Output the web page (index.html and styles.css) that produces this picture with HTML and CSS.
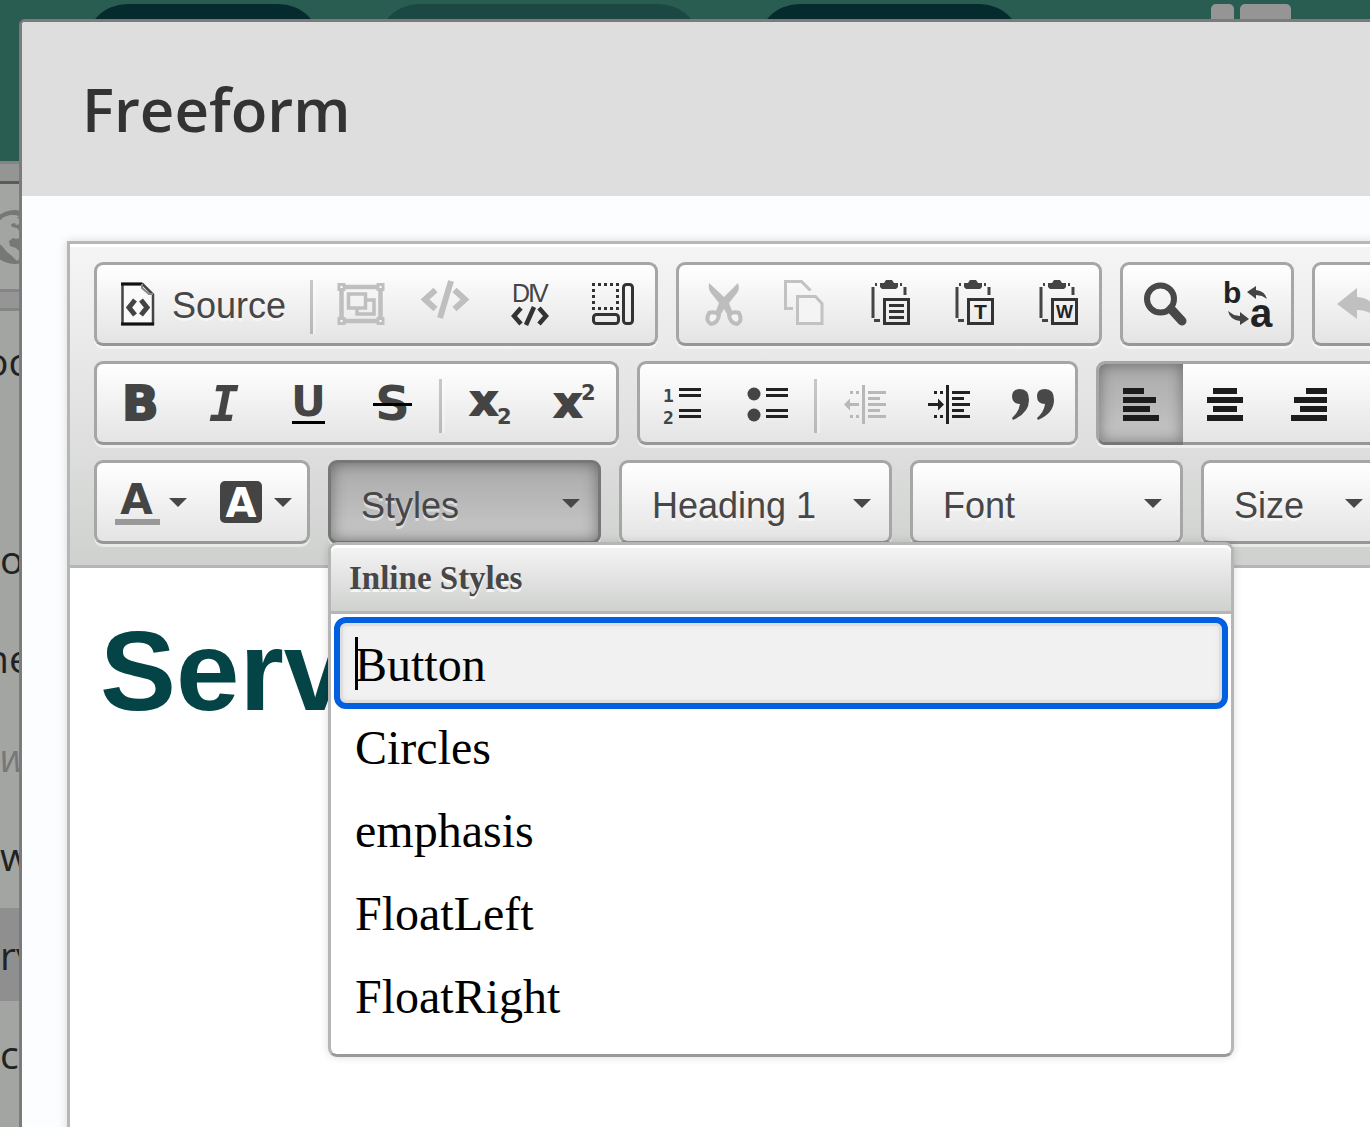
FILE: index.html
```html
<!DOCTYPE html>
<html lang="en">
<head>
  <meta charset="utf-8">
  <title>Freeform</title>
  <link rel="stylesheet" href="styles.css">
</head>
<body>
  <div class="page">
    <div class="site-header">
      <span class="pill pill-small"></span>
      <span class="pill pill-large"></span>
      <span class="pill pill-medium"></span>
      <div class="header-tabs">
        <span class="header-tab"></span>
        <span class="header-tab header-tab-wide"></span>
      </div>
    </div>
    <div class="sidebar">
      <div class="sidebar-bar sidebar-bar-top"></div>
      <div class="sidebar-globe">
        <svg class="globe" viewBox="0 0 54 54">
          <circle cx="27" cy="27" r="27" fill="#767876"/>
          <path d="M10 12l6-5 6-2 5 0 4 1-2 2 3 1v5l-4 1-1-2-4 1 1 3 5 1 3 4v6l-4 1-3-1-4 3 1 5 6 2 4 4v6l-3 3-5-5-5-4-5-6-4-3-3-7-2-6 2-5z" fill="#a3a5a3"/>
        </svg>
      </div>
      <div class="sidebar-bar sidebar-bar-mid"></div>
      <ul class="tree">
        <li class="tree-shifted">oc</li>
        <li></li>
        <li>o</li>
        <li class="tree-shifted">ne</li>
        <li class="tree-muted">w</li>
        <li>w</li>
        <li class="tree-selected">rv</li>
        <li>c</li>
      </ul>
    </div>
  </div>

  <div class="dialog" role="dialog" aria-labelledby="dialogTitle">
    <div class="dialog-header">
      <h1 id="dialogTitle">Freeform</h1>
    </div>
    <div class="dialog-body">
      <div class="editor">
        <div class="toolbar">
          <div class="toolbar-row">
            <div class="group">
              <button class="btn" type="button">
                <svg class="icon" viewBox="0 0 48 48"><path d="M7.500 4h20l10.500 10.500v29.500h-30.500z" fill="#fafafa" stroke="#444" stroke-width="2.500"/><path d="M6 4h21M6 44h33" stroke="#111" stroke-width="3"/><path d="M27 4v4l7 6h4" fill="none" stroke="#888" stroke-width="2"/><path d="M20 20l-6 7.500 6 7.500M26 20l6 7.500-6 7.500" fill="none" stroke="#444" stroke-width="5"/></svg>
                <span class="btn-label">Source</span>
              </button>
              <span class="separator"></span>
              <button class="btn" type="button" aria-label="Group" disabled>
                <svg class="icon" viewBox="0 0 48 48" fill="none" stroke="#bfbfbf" stroke-width="3"><path d="M4.500 7h39v34h-39z" stroke-width="4.500"/><path d="M11.500 14h17v14h-17zM29 20h8v14h-17v-6" stroke-width="3.500"/><path d="M2 4.500h5v5h-5zM41 4.500h5v5h-5zM2 38.500h5v5h-5zM41 38.500h5v5h-5z" fill="#fff"/></svg>
              </button>
              <button class="btn" type="button" aria-label="Code" disabled>
                <svg class="icon" viewBox="0 0 48 48" fill="none" stroke="#bfbfbf" stroke-width="6"><path d="M14.500 10l-10.500 9.500 10.500 9.500M33.500 10l10.500 9.500-10.500 9.500M30 1l-11 37"/></svg>
              </button>
              <button class="btn" type="button" aria-label="Create div">
                <svg class="icon" viewBox="0 0 48 48"><text class="glyph-narrow" x="7 23 27" y="22" font-size="25">DIV</text><path d="M16 28l-7 8 7 8M34 28l7 8-7 8M29 27l-8 18" fill="none" stroke="#333" stroke-width="4.500"/></svg>
              </button>
              <button class="btn" type="button" aria-label="Show blocks">
                <svg class="icon" viewBox="0 0 48 48" fill="none" stroke="#333" stroke-width="3"><path d="M3 4.500h28M3 28.500h28M4.500 9v18M28.500 9v18" stroke-dasharray="3 3"/><rect x="4.500" y="34.500" width="25" height="9" rx="3"/><rect x="34.500" y="4.500" width="9" height="39" rx="3"/></svg>
              </button>
            </div>
            <div class="group">
              <button class="btn" type="button" aria-label="Cut" disabled>
                <svg class="icon" viewBox="0 0 48 48"><path d="M12 3q-1 6 2 10l8 10-3 8 5 3 3-5 3 5 5-3-3-8 8-10q3-4 1-10l-14 14z" fill="#bdbdbd"/><g fill="#f4f4f4" stroke="#bdbdbd" stroke-width="4"><path d="M12 33q6-2 10 2-1 8-8 9-6-3-2-11zM42 33q-6-2-10 2 1 8 8 9 6-3 2-11z"/></g></svg>
              </button>
              <button class="btn" type="button" aria-label="Copy" disabled>
                <svg class="icon" viewBox="0 0 48 48" fill="none" stroke="#c2c2c2" stroke-width="3"><path d="M12 28.500h-7.500v-27h16l9 9"/><path d="M16.500 16.500h18l6.500 7v20h-24.500z" fill="#f4f4f4"/></svg>
              </button>
              <button class="btn" type="button" aria-label="Paste">
                <svg class="icon" viewBox="0 0 48 48" fill="none" stroke="#333" stroke-width="3"><path d="M12 4.500h-2M8 7v31M9 40.500h6M35 4.500h2M40 7v8" stroke="#444"/><path d="M15 3h4l2-3h6l2 3h4v4l-2 2h-14l-2-2z" fill="#444" stroke="none"/><path d="M19.500 19.500h24v24h-24zM24 25.500h15M24 31.500h15M24 37.500h15"/></svg>
              </button>
              <button class="btn" type="button" aria-label="Paste as plain text">
                <svg class="icon" viewBox="0 0 48 48" fill="none" stroke="#333" stroke-width="3"><path d="M12 4.500h-2M8 7v31M9 40.500h6M35 4.500h2M40 7v8" stroke="#444"/><path d="M15 3h4l2-3h6l2 3h4v4l-2 2h-14l-2-2z" fill="#444" stroke="none"/><path d="M19.500 19.500h24v24h-24z"/><text class="glyph-thin" x="31.500" y="39" font-size="21" text-anchor="middle">T</text></svg>
              </button>
              <button class="btn" type="button" aria-label="Paste from Word">
                <svg class="icon" viewBox="0 0 48 48" fill="none" stroke="#333" stroke-width="3"><path d="M12 4.500h-2M8 7v31M9 40.500h6M35 4.500h2M40 7v8" stroke="#444"/><path d="M15 3h4l2-3h6l2 3h4v4l-2 2h-14l-2-2z" fill="#444" stroke="none"/><path d="M19.500 19.500h24v24h-24z"/><text class="glyph-thin" x="31.500" y="38" font-size="18" text-anchor="middle">W</text></svg>
              </button>
            </div>
            <div class="group">
              <button class="btn" type="button" aria-label="Find">
                <svg class="icon" viewBox="0 0 48 48" fill="none" stroke="#484848"><circle cx="19.500" cy="19" r="13.500" stroke-width="6"/><path d="M30 29l11 12" stroke-width="9" stroke-linecap="round"/></svg>
              </button>
              <button class="btn" type="button" aria-label="Replace">
                <svg class="icon" viewBox="0 0 48 48"><text class="glyph-thin" x="-2" y="23" font-size="30">b</text><text class="glyph-thin" x="25" y="47" font-size="40">a</text><path d="M22 12l9-6v4q9 1 11 9l-5-3-6-1v4zM24 39l-9 6v-4q-10-1-12-10l6 4 6 1v-4z" fill="#444"/></svg>
              </button>
            </div>
            <div class="group">
              <button class="btn" type="button" aria-label="Undo" disabled>
                <svg class="icon" viewBox="0 0 48 48"><path d="M4 24l20-16v9q19 1 20 22-7-9-20-9v9z" fill="#c0c0c0"/></svg>
              </button>
            </div>
          </div>

          <div class="toolbar-row">
            <div class="group">
              <button class="btn" type="button" aria-label="Bold">
                <svg class="icon" viewBox="0 0 48 48"><text class="glyph glyph-heavy" x="7" y="41" font-size="48">B</text></svg>
              </button>
              <button class="btn" type="button" aria-label="Italic">
                <svg class="icon" viewBox="0 0 48 48"><text class="glyph-mono glyph-italic" x="25" y="42" font-size="50" text-anchor="middle">I</text></svg>
              </button>
              <button class="btn" type="button" aria-label="Underline">
                <svg class="icon" viewBox="0 0 48 48"><text class="glyph" x="25.500" y="37" font-size="43" text-anchor="middle">U</text><path d="M9 42h33v3h-33z"/></svg>
              </button>
              <button class="btn" type="button" aria-label="Strikethrough">
                <svg class="icon" viewBox="0 0 48 48"><text class="glyph" x="25.500" y="41" font-size="48" text-anchor="middle">S</text><path d="M6 24h39v3h-39z"/></svg>
              </button>
              <span class="separator"></span>
              <button class="btn" type="button" aria-label="Subscript">
                <svg class="icon" viewBox="0 0 48 48"><text class="glyph glyph-heavy" x="4" y="36" font-size="43">x</text><text class="glyph" x="31" y="45" font-size="21">2</text></svg>
              </button>
              <button class="btn" type="button" aria-label="Superscript">
                <svg class="icon" viewBox="0 0 48 48"><text class="glyph glyph-heavy" x="4" y="38" font-size="43">x</text><text class="glyph" x="31" y="21" font-size="21">2</text></svg>
              </button>
            </div>
            <div class="group">
              <button class="btn" type="button" aria-label="Numbered list">
                <svg class="icon" viewBox="0 0 48 48"><text class="glyph-mono" x="5" y="23" font-size="18">1</text><text class="glyph-mono" x="5" y="45" font-size="18">2</text><path d="M21 9h22v3h-22zM21 15h22v3h-22zM21 30h22v3h-22zM21 36h22v3h-22z" fill="#222"/></svg>
              </button>
              <button class="btn" type="button" aria-label="Bulleted list">
                <svg class="icon" viewBox="0 0 48 48" fill="#222"><circle cx="12" cy="15" r="6.500" fill="#444"/><circle cx="12" cy="36" r="6.500" fill="#444"/><path d="M24 9h22v3h-22zM24 15h22v3h-22zM24 30h22v3h-22zM24 36h22v3h-22z"/></svg>
              </button>
              <span class="separator"></span>
              <button class="btn" type="button" aria-label="Decrease indent" disabled>
                <svg class="icon" viewBox="0 0 48 48" fill="#b8b8b8"><path d="M21 6h3v39h-3zM27 12h18v3h-18zM27 18h12v3h-12zM27 24h18v3h-18zM27 30h12v3h-12zM27 36h18v3h-18zM9 12h3v3h-3zM15 12h3v3h-3zM9 36h3v3h-3zM15 36h3v3h-3zM3 25.500l6-6v4.500h9v3h-9v4.500z"/></svg>
              </button>
              <button class="btn" type="button" aria-label="Increase indent">
                <svg class="icon" viewBox="0 0 48 48" fill="#222"><path d="M21 6h3v39h-3zM27 12h18v3h-18zM27 18h12v3h-12zM27 24h18v3h-18zM27 30h12v3h-12zM27 36h18v3h-18zM9 12h3v3h-3zM15 12h3v3h-3zM9 36h3v3h-3zM15 36h3v3h-3zM19 25.500l-6-6v4.500h-10v3h10v4.500z"/></svg>
              </button>
              <button class="btn" type="button" aria-label="Block quote">
                <svg class="icon" viewBox="0 0 48 48" fill="#484848"><path d="M3 17q0-7 8-7 9 0 9 11 0 13-16 20l-1-2q7-6 8-14-8 0-8-8zM28 17q0-7 8-7 9 0 9 11 0 13-16 20l-1-2q7-6 8-14-8 0-8-8z"/></svg>
              </button>
            </div>
            <div class="group">
              <button class="btn btn-on" type="button" aria-label="Align left" aria-pressed="true">
                <svg class="icon" viewBox="0 0 48 48" fill="#1c1c1c"><path d="M6 9h21v6h-21zM6 18h33v6h-33zM6 27h27v6h-27zM6 36h36v6h-36z"/></svg>
              </button>
              <button class="btn" type="button" aria-label="Center">
                <svg class="icon" viewBox="0 0 48 48" fill="#1c1c1c"><path d="M12 9h24v6h-24zM6 18h36v6h-36zM12 27h24v6h-24zM6 36h36v6h-36z"/></svg>
              </button>
              <button class="btn" type="button" aria-label="Align right">
                <svg class="icon" viewBox="0 0 48 48" fill="#1c1c1c"><path d="M21 9h21v6h-21zM9 18h33v6h-33zM15 27h27v6h-27zM6 36h36v6h-36z"/></svg>
              </button>
              <button class="btn" type="button" aria-label="Justify">
                <svg class="icon" viewBox="0 0 48 48" fill="#1c1c1c"><path d="M6 9h36v6h-36zM6 18h36v6h-36zM6 27h36v6h-36zM6 36h36v6h-36z"/></svg>
              </button>
            </div>
          </div>

          <div class="toolbar-row">
            <div class="group">
              <button class="btn btn-menu" type="button" aria-label="Text color">
                <svg class="icon" viewBox="0 0 48 48"><text class="glyph" x="21.500" y="36" font-size="42" text-anchor="middle">A</text><path d="M0 41h45v6h-45z" fill="#999"/></svg>
                <span class="arrow"></span>
              </button>
              <button class="btn btn-menu" type="button" aria-label="Background color">
                <svg class="icon" viewBox="0 0 48 48"><rect x="0" y="3" width="42" height="42" rx="5" fill="#444"/><text class="glyph glyph-light" x="21" y="39" font-size="40" text-anchor="middle">A</text></svg>
                <span class="arrow"></span>
              </button>
            </div>
            <div class="combo combo-open">
              <button class="combo-field" type="button" aria-haspopup="listbox" aria-expanded="true">Styles</button>
              <span class="arrow"></span>
              <div class="panel">
                <h2 class="panel-title">Inline Styles</h2>
                <ul class="panel-list">
                  <li><a class="focused" href="#">Button</a></li>
                  <li><a href="#">Circles</a></li>
                  <li><a href="#">emphasis</a></li>
                  <li><a href="#">FloatLeft</a></li>
                  <li><a href="#">FloatRight</a></li>
                </ul>
              </div>
            </div>
            <div class="combo">
              <select class="combo-field" aria-label="Paragraph format"><option>Heading 1</option></select>
              <span class="arrow"></span>
            </div>
            <div class="combo">
              <select class="combo-field" aria-label="Font name"><option>Font</option></select>
              <span class="arrow"></span>
            </div>
            <div class="combo combo-small">
              <select class="combo-field" aria-label="Font size"><option>Size</option></select>
              <span class="arrow"></span>
            </div>
          </div>
        </div>
        <div class="content">
          <h1>Serv</h1>
        </div>
      </div>
    </div>
  </div>
</body>
</html>
```
FILE: styles.css
```css
html, body {
  margin: 0;
  height: 100%;
  overflow: hidden;
}

body {
  position: relative;
  background: #a3a5a3;
  font-family: "Open Sans", sans-serif;
}

h1, h2, ul {
  margin: 0;
  padding: 0;
}

ul {
  list-style: none;
}

/* Dimmed page behind the dialog */
.site-header {
  display: flex;
  gap: 54px;
  box-sizing: border-box;
  height: 161px;
  padding: 4px 79px 0 84px;
  background: #2a5d51;
}

.pill {
  width: 238px;
  height: 88px;
  border-radius: 44px;
  background: #052b2e;
}

.pill-large {
  width: 326px;
  background: #1c4844;
}

.pill-medium {
  width: 267px;
}

.header-tabs {
  display: flex;
  gap: 6px;
  margin-left: auto;
}

.header-tab {
  width: 23px;
  height: 40px;
  border-radius: 5px;
  background: #959595;
}

.header-tab-wide {
  width: 51px;
}

.sidebar-bar {
  box-sizing: border-box;
  background: #959595;
  border-top: 3px solid #848484;
}

.sidebar-bar-top {
  height: 23px;
  border-bottom: 3px solid #5b5b5b;
}

.sidebar-bar-mid {
  height: 22px;
  border-bottom: 3px solid #848484;
}

.sidebar-globe {
  display: flex;
  align-items: center;
  height: 105px;
}

.globe {
  width: 54px;
  height: 54px;
  margin-left: -12px;
}

.tree {
  padding-top: 3px;
}

.tree li {
  height: 93px;
  margin-bottom: 6px;
  color: #222;
  font-size: 39px;
  line-height: 93px;
}

.tree .tree-shifted {
  text-indent: -15px;
}

.tree .tree-muted {
  color: #777;
  font-style: italic;
}

.tree .tree-selected {
  background: #8f8f8f;
}

/* Dialog */
.dialog {
  position: absolute;
  top: 19px;
  right: -80px;
  bottom: -80px;
  left: 19px;
  display: flex;
  flex-direction: column;
  overflow: hidden;
  border: 3px solid #7b7b7b;
  border-radius: 6px;
  background: #fbfdff;
}

.dialog-header {
  padding: 45px 60px;
  background: #dedede;
}

.dialog-header h1 {
  color: #333;
  font-size: 60px;
  font-weight: 600;
  line-height: 84px;
}

.dialog-body {
  display: flex;
  flex: 1;
  padding: 45px 0 0 45px;
}

.editor {
  display: flex;
  flex: 1;
  flex-direction: column;
  min-width: 0;
  border: 3px solid #b6b6b6;
  background: #fff;
  box-shadow: 0 0 9px rgba(0, 0, 0, 0.15);
}

/* Toolbar */
.toolbar {
  display: flex;
  flex-direction: column;
  gap: 15px;
  padding: 18px 24px 21px;
  border-bottom: 3px solid #b6b6b6;
  background: linear-gradient(#f5f5f5, #cfd1cf);
  box-shadow: inset 0 3px 0 #fff;
}

.toolbar-row {
  display: flex;
  gap: 18px;
}

.group, .combo {
  display: flex;
  flex-shrink: 0;
  height: 78px;
  border: 3px solid #a6a6a6;
  border-bottom-color: #979797;
  border-radius: 9px;
  background: linear-gradient(#fff, #e4e4e4);
  box-shadow: 0 3px 0 rgba(255, 255, 255, 0.5);
}

.btn {
  display: flex;
  align-items: center;
  padding: 0 18px;
  border: none;
  background: none;
  color: #474747;
}

.btn-on {
  border-radius: 6px 0 0 6px;
  background: linear-gradient(#aaa, #c6c6c6);
  box-shadow: inset 0 0 15px rgba(0, 0, 0, 0.4), 0 3px 0 #777;
}

.icon {
  width: 48px;
  height: 48px;
  overflow: visible;
}

.glyph, .glyph-mono, .glyph-narrow, .glyph-thin {
  fill: #444;
  stroke: none;
  font-family: "DejaVu Sans", sans-serif;
  font-weight: bold;
}

.glyph-mono {
  font-family: "DejaVu Sans Mono", monospace;
}

.glyph-narrow {
  font-family: "Liberation Sans Narrow", "Liberation Sans", sans-serif;
  font-weight: normal;
}

.glyph-thin {
  fill: #222;
  font-family: "Liberation Sans", Arial, sans-serif;
}

.glyph-italic {
  font-style: italic;
}

.glyph-heavy {
  stroke: #444;
  stroke-width: 2px;
}

.glyph-light {
  fill: #fff;
}

.btn-label {
  padding: 3px 0 0 9px;
  font-family: "Liberation Sans", Arial, sans-serif;
  font-size: 36px;
  text-shadow: 0 3px 0 rgba(255, 255, 255, 0.5);
}

.separator {
  width: 3px;
  height: 54px;
  margin: 15px 6px 0;
  background: linear-gradient(#c8c8c8, #b8b8b8);
  box-shadow: 3px 0 0 rgba(255, 255, 255, 0.3);
}

.arrow {
  border: 9px solid transparent;
  border-top-color: #474747;
  border-bottom: none;
}

.btn-menu {
  gap: 6px;
  padding-right: 15px;
}

/* Combos */
.combo {
  position: relative;
  width: 267px;
}

.combo-small {
  width: 177px;
}

.combo-field {
  appearance: none;
  flex: 1;
  padding: 7px 48px 0 30px;
  border: none;
  outline: none;
  background: none;
  color: #474747;
  font-family: "Liberation Sans", Arial, sans-serif;
  font-size: 36px;
  text-align: left;
  text-shadow: 0 3px 0 rgba(255, 255, 255, 0.5);
}

.combo > .arrow {
  position: absolute;
  top: 36px;
  right: 18px;
  pointer-events: none;
}

.combo-open {
  z-index: 1;
  border-color: #777;
  background: linear-gradient(#aaa, #c8c8c8);
}

.combo-open .combo-field {
  border-radius: 6px;
  box-shadow: inset 0 0 15px rgba(0, 0, 0, 0.4);
}

/* Styles drop-down */
.panel {
  position: absolute;
  top: 79px;
  left: -3px;
  width: 900px;
  border: 3px solid #b6b6b6;
  border-bottom-color: #999;
  border-radius: 9px;
  background: #fff;
  box-shadow: 0 0 9px rgba(0, 0, 0, 0.15);
  font-family: "Liberation Serif", "Times New Roman", serif;
}

.panel-title {
  padding: 0 18px;
  border-bottom: 3px solid #b6b6b6;
  border-radius: 6px 6px 0 0;
  background: linear-gradient(#f5f5f5, #cfd1cf);
  box-shadow: inset 0 3px 0 #fff;
  color: #474747;
  font-size: 33px;
  line-height: 66px;
  text-shadow: 0 3px 0 rgba(255, 255, 255, 0.75);
}

.panel-list {
  display: flex;
  flex-direction: column;
  gap: 3px;
  padding: 9px 9px 19px;
}

.panel-list a {
  display: block;
  padding: 4px 15px 0;
  color: #000;
  font-size: 48px;
  line-height: 76px;
  text-decoration: none;
}

.panel-list .focused {
  position: relative;
  border-radius: 6px;
  outline: 6px solid #0060e0;
  background: #f1f1f1;
  box-shadow: inset 0 0 0 3px #dedede, inset 0 0 9px rgba(0, 0, 0, 0.1);
}

/* Text caret */
.panel-list .focused::before {
  content: '';
  position: absolute;
  top: 14px;
  left: 15px;
  width: 3px;
  height: 53px;
  background: #000;
}

/* Edited document */
.content {
  padding: 37px 30px;
}

.content h1 {
  color: #044447;
  font-family: "Liberation Sans", Arial, sans-serif;
  font-size: 114px;
  line-height: 132px;
}
```
